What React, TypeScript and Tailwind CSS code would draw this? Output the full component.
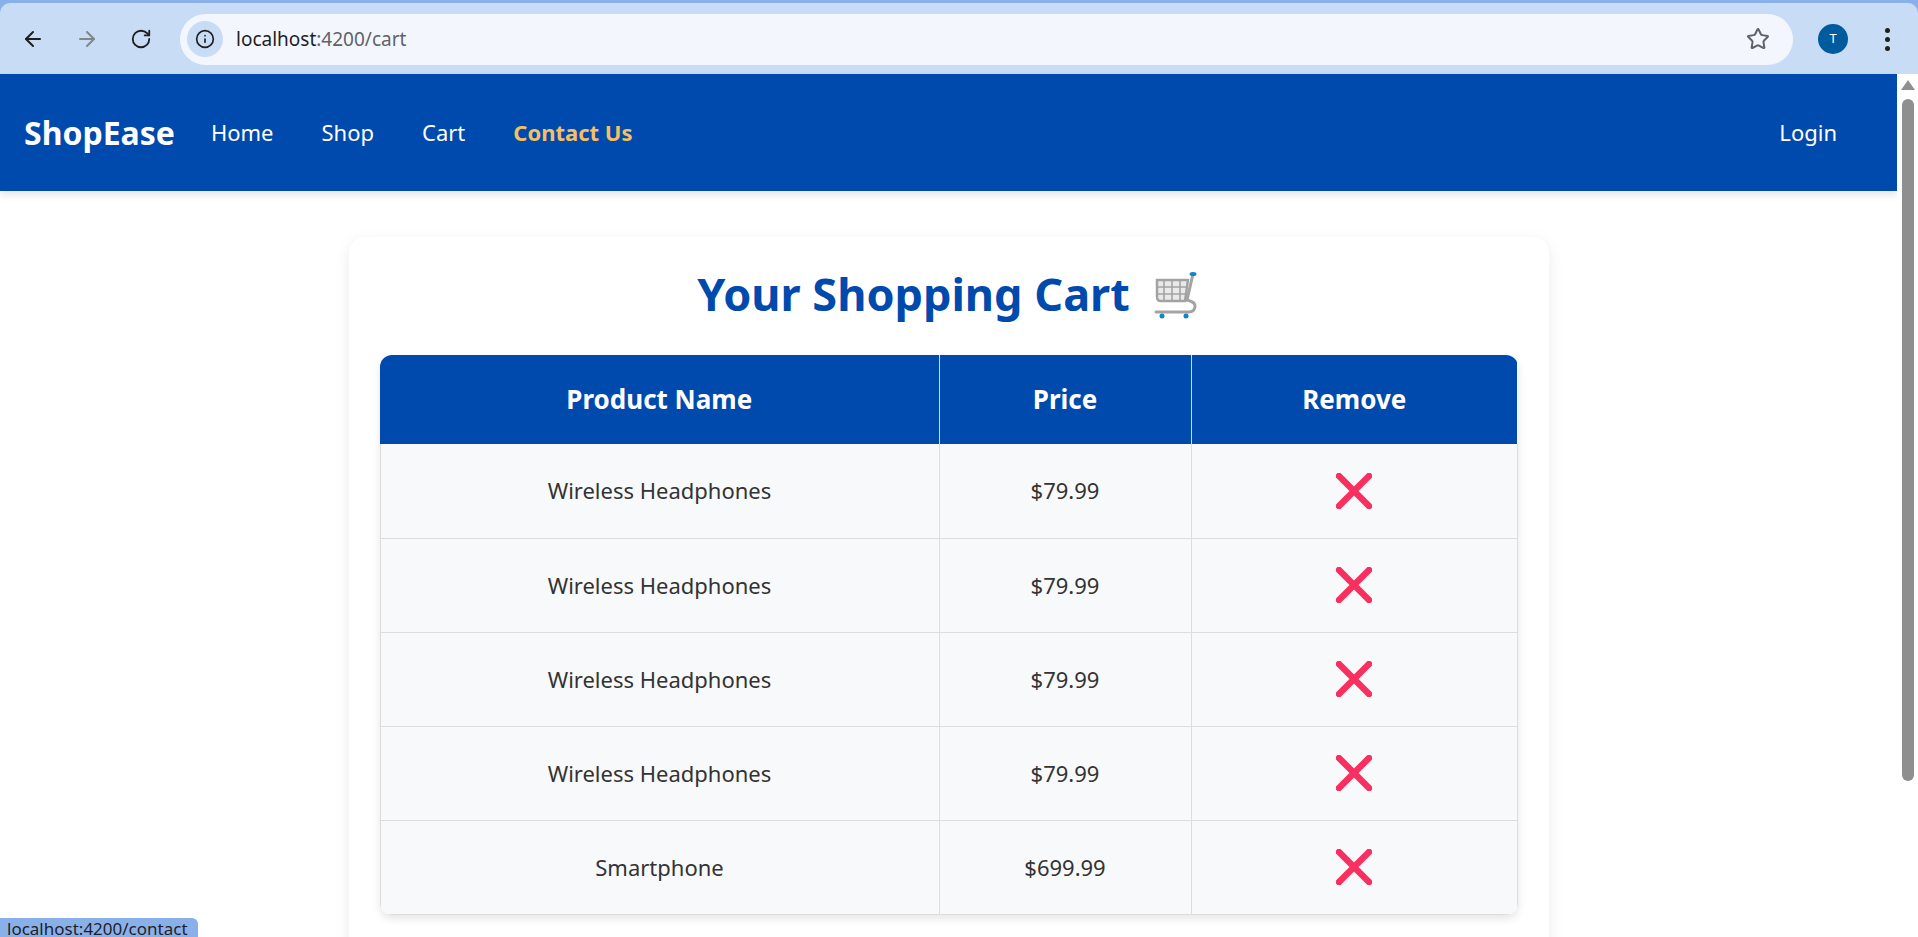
import { ArrowLeft, ArrowRight, Info, RotateCw, Star } from "lucide-react";

const cartItems = [
  { name: "Wireless Headphones", price: "$79.99" },
  { name: "Wireless Headphones", price: "$79.99" },
  { name: "Wireless Headphones", price: "$79.99" },
  { name: "Wireless Headphones", price: "$79.99" },
  { name: "Smartphone", price: "$699.99" },
];

const CartEmoji = () => (
  <svg width="50" height="50" viewBox="0 0 50 50" className="shrink-0">
    <g fill="none" stroke="#a3a3a3">
      <path d="M7 11h31l-3 21H11q-4 0-4-4z" strokeWidth="2.5" fill="#e9e9e9" />
      <path d="M14 11v21M22 11v21M30 11v21M7 18h30M7 25h29" strokeWidth="1.6" />
      <path d="M43 5l-6 26q9 2 8 7t-6 5H6" strokeWidth="3" strokeLinecap="round" />
    </g>
    <ellipse cx="43" cy="5" rx="3.5" ry="2" fill="#1583c9" />
    <circle cx="12" cy="47" r="2.5" fill="#1583c9" />
    <circle cx="36" cy="47" r="2.5" fill="#1583c9" />
  </svg>
);

const RemoveIcon = () => (
  <svg width="36" height="36" viewBox="0 0 36 36">
    <path d="M3 3l30 30M33 3L3 33" stroke="#f92f60" strokeWidth="6.5" strokeLinecap="round" />
  </svg>
);

const BrowserBar = () => (
  <div className="h-[74px] shrink-0 bg-[#8ab0ea]">
    <div className="flex h-full items-center rounded-t-[10px] border-b-2 border-[#a9b4c6] bg-[#c9dcf6] mt-[3px] h-[71px] pl-[21px]">
      <ArrowLeft size={24} strokeWidth={2} className="text-[#1f1f1f]" />
      <ArrowRight size={24} strokeWidth={2} className="ml-[30px] text-[#80868b]" />
      <RotateCw size={22} strokeWidth={2} className="ml-[31px] text-[#1f1f1f]" />
      <div className="ml-[28px] flex h-[51px] w-[1613px] items-center rounded-full bg-[#f3f7fd] pl-[7px]">
        <span className="flex h-9 w-9 items-center justify-center rounded-full bg-[#c9dcf6]">
          <Info size={20} strokeWidth={2} className="text-[#1f1f1f]" />
        </span>
        <span className="ml-[13px] text-[19px] text-[#1f1f1f]">
          localhost<span className="text-[#5f6368]">:4200/cart</span>
        </span>
        <Star size={24} strokeWidth={2} className="ml-auto mr-[23px] text-[#5f6368]" />
      </div>
      <span className="ml-[25px] flex h-[30px] w-[30px] items-center justify-center rounded-full bg-[#005a9e] text-[13px] text-white">
        T
      </span>
      <span className="ml-[37px] flex flex-col gap-[4px]">
        <span className="h-[5px] w-[5px] rounded-full bg-[#1f1f1f]" />
        <span className="h-[5px] w-[5px] rounded-full bg-[#1f1f1f]" />
        <span className="h-[5px] w-[5px] rounded-full bg-[#1f1f1f]" />
      </span>
    </div>
  </div>
);

const Navbar = () => (
  <nav className="flex h-[117px] shrink-0 items-center bg-[#004aad] pl-6 pr-[60px] text-[22px] text-white shadow-[0_4px_8px_rgba(0,0,0,0.1)]">
    <span className="mr-9 text-[32px] font-bold">ShopEase</span>
    <a className="mr-12">Home</a>
    <a className="mr-12">Shop</a>
    <a className="mr-12">Cart</a>
    <a className="font-bold text-[#f4c063]">Contact Us</a>
    <a className="ml-auto">Login</a>
  </nav>
);

const Scrollbar = () => (
  <div className="flex w-[21px] shrink-0 flex-col items-center bg-white">
    <div className="mt-[6px] h-0 w-0 border-x-[7px] border-b-[10px] border-x-transparent border-b-[#8f8f8f]" />
    <div className="mt-[9px] h-[682px] w-3 rounded-full bg-[#8f8f8f]" />
  </div>
);

export default function App() {
  return (
    <div className="relative flex h-screen flex-col overflow-hidden bg-white font-['Noto_Sans',sans-serif]">
      <BrowserBar />
      <div className="flex min-h-0 flex-1">
        <div className="min-w-0 flex-1">
          <Navbar />
          <main className="mx-auto mt-[46px] w-[1200px] rounded-2xl bg-white px-[31px] pt-[22px] shadow-[0_4px_16px_rgba(0,0,0,0.08)]">
            <h1 className="mb-[27px] flex h-[69px] items-center justify-center gap-5 text-[45px] font-bold text-[#004aad]">
              Your Shopping Cart
              <CartEmoji />
            </h1>
            <div className="overflow-hidden rounded-xl shadow-[0_4px_8px_rgba(0,0,0,0.1)]">
              <table className="w-full table-fixed border-collapse text-center">
                <thead>
                  <tr className="h-[89px] bg-[#004aad] text-[26px] font-bold text-white">
                    <th className="w-[559px] border-r border-[#d9d9d9]">Product Name</th>
                    <th className="w-[252px] border-r border-[#d9d9d9]">Price</th>
                    <th>Remove</th>
                  </tr>
                </thead>
                <tbody>
                  {cartItems.map((item, index) => (
                    <tr key={index} className="h-[94px] border-b border-[#dddddd] bg-[#f8f9fa] text-[22px] text-[#333333]">
                      <td className="border-x border-[#dddddd]">{item.name}</td>
                      <td className="border-x border-[#dddddd]">{item.price}</td>
                      <td className="border-x border-[#dddddd]">
                        <span className="flex justify-center">
                          <RemoveIcon />
                        </span>
                      </td>
                    </tr>
                  ))}
                </tbody>
              </table>
            </div>
            <div className="h-16" />
          </main>
        </div>
        <Scrollbar />
      </div>
      <div className="absolute bottom-0 left-0 h-[19px] w-[198px] overflow-hidden rounded-tr-md bg-[#8ab0ea] pl-[7px] text-[17px] leading-[22px] text-[#1f1f1f]">
        localhost:4200/contact
      </div>
    </div>
  );
}
